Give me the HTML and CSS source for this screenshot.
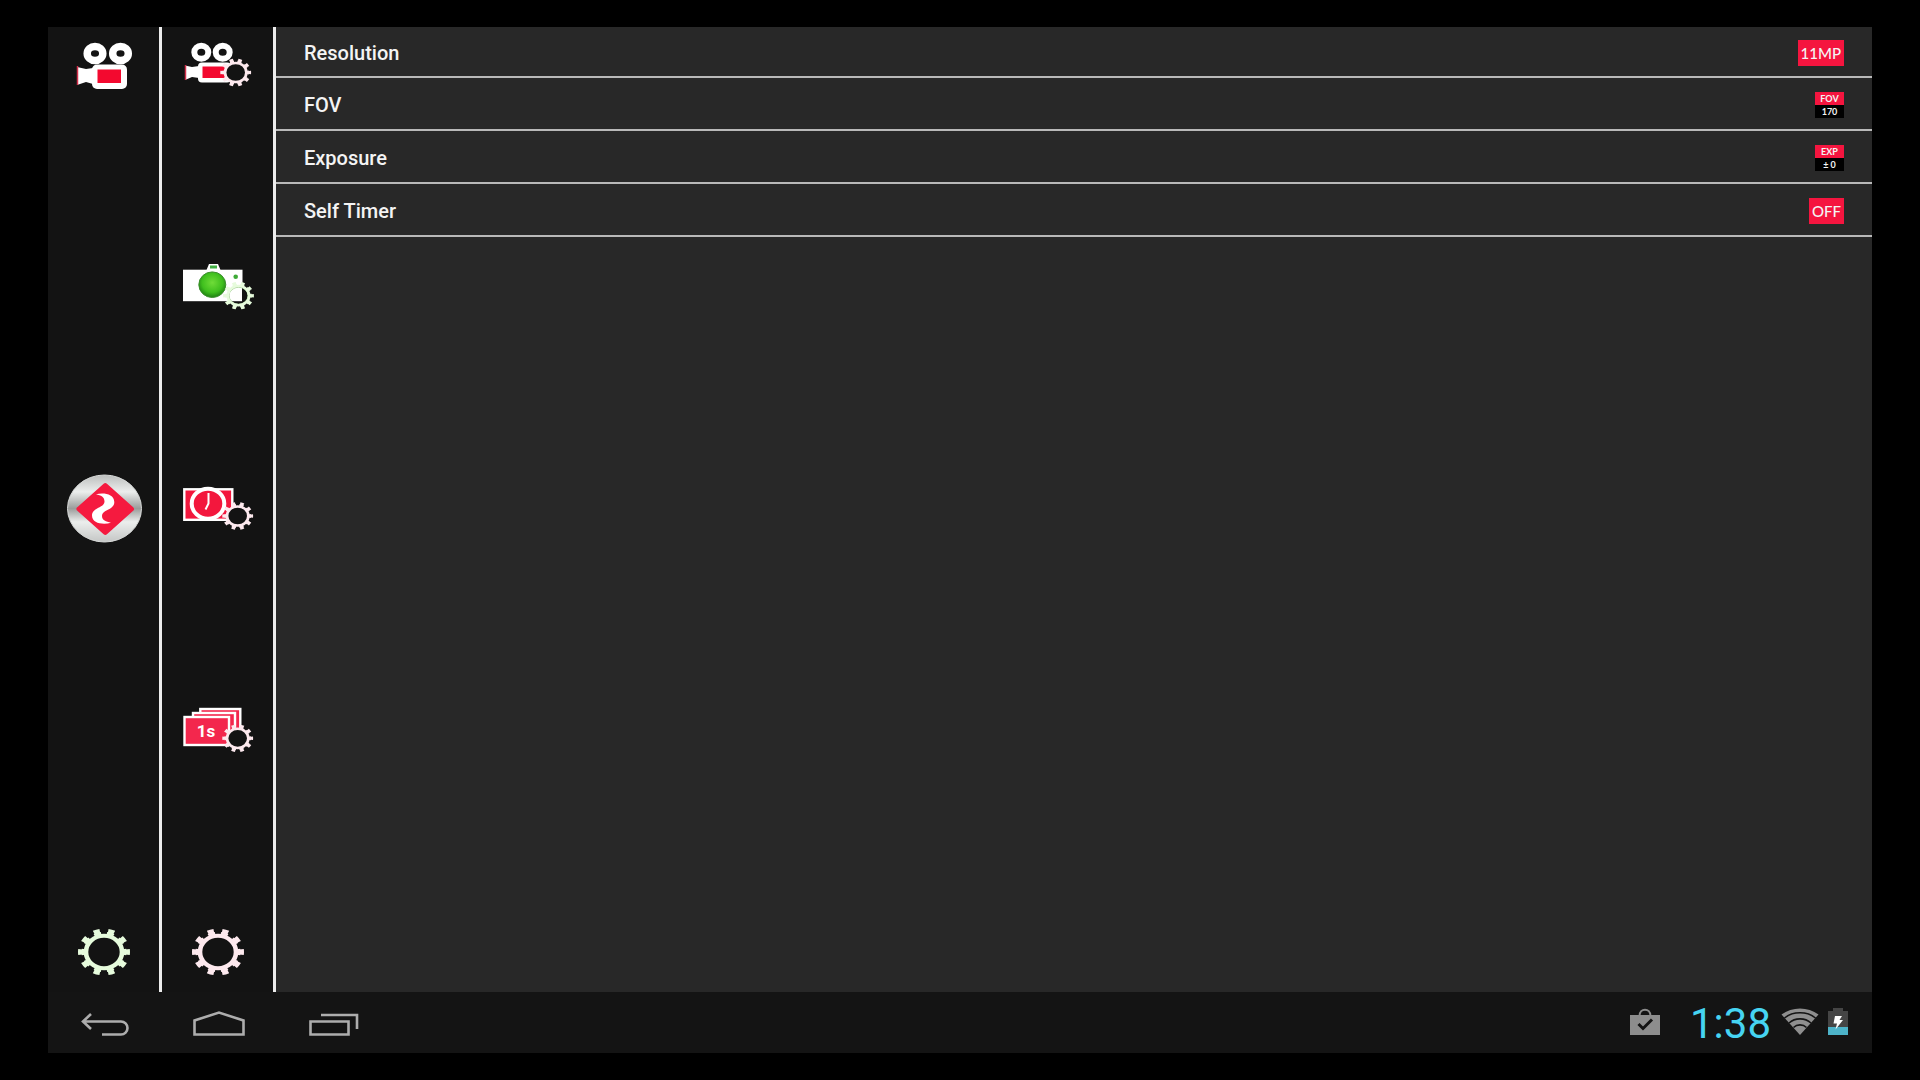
FILE: index.html
```html
<!DOCTYPE html>
<html lang="en">
<head>
    <meta charset="UTF-8">
    <meta name="viewport" content="width=device-width, initial-scale=1.0">
    <title>Photo Settings</title>
    <link rel="stylesheet" href="styles.css">
</head>
<body>

    <!-- Shared gear shape -->
    <svg class="defs" width="0" height="0" aria-hidden="true">
        <defs>
            <symbol id="gear" viewBox="-27 -27 54 54" overflow="visible">
                <g transform="scale(1 0.9)" fill="none" stroke="currentColor">
                    <circle r="18" stroke-width="4.6"/>
                    <circle r="20.5" stroke-width="4" pathLength="10" stroke-dasharray="0.54 0.46" stroke-dashoffset="0.27"/>
                    <circle r="22.5" stroke-width="7" pathLength="10" stroke-dasharray="0.42 0.58" stroke-dashoffset="0.21"/>
                </g>
            </symbol>
            <radialGradient id="lens" cx="0.5" cy="0.42" r="0.58">
                <stop offset="0" stop-color="#6fdc38"/>
                <stop offset="0.65" stop-color="#3fbf1e"/>
                <stop offset="1" stop-color="#1f8012"/>
            </radialGradient>
            <linearGradient id="metal" x1="0" y1="0" x2="0" y2="1">
                <stop offset="0" stop-color="#bcbebd"/>
                <stop offset="0.25" stop-color="#eceeed"/>
                <stop offset="0.5" stop-color="#9a9c9b"/>
                <stop offset="0.7" stop-color="#eceeed"/>
                <stop offset="1" stop-color="#c4c6c5"/>
            </linearGradient>
        </defs>
    </svg>

    <main class="app">
        <!-- Main mode bar -->
        <nav class="sidebar" aria-label="Mode">
            <button class="tool" type="button" aria-label="Video">
                <svg width="81" height="74" viewBox="0 0 81 74">
                    <path d="M14 40 L23 42 L30 41 V57 L23 55 L14 58 Z" fill="#fff"/>
                    <path d="M14.5 39 V58" stroke="#d2304c" stroke-width="1.5"/>
                    <rect x="29" y="37.5" width="35" height="24.5" rx="5" fill="#fff"/>
                    <rect x="34.5" y="42.5" width="23.5" height="13.5" fill="#f3092f"/>
                    <ellipse cx="32" cy="26.5" rx="7.8" ry="7" fill="#131313" stroke="#fff" stroke-width="7.5"/>
                    <ellipse cx="57.5" cy="26.5" rx="7.8" ry="7" fill="#131313" stroke="#fff" stroke-width="7.5"/>
                </svg>
            </button>
            <button class="tool" type="button" aria-label="Shutter">
                <svg width="81" height="74" viewBox="0 0 81 74">
                    <ellipse cx="41.5" cy="37.5" rx="37" ry="33.5" fill="url(#metal)" stroke="#d8dad9" stroke-width="1"/>
                    <path d="M42.3 14.5 L68.5 38 L42.3 61.5 L16 38 Z" fill="#f51a3f" stroke="#f51a3f" stroke-width="5" stroke-linejoin="round"/>
                    <path d="M33 23.3 C41 21.5 51 23 51.3 31 C51.5 39 39 38.5 39 45 C39 49.5 43 50.5 48 51.8 C40 54 29 52.5 29 44.5 C29 36.5 41.5 37 41.5 30.5 C41.5 26 38 24.5 33 23.3 Z" fill="#fff"/>
                </svg>
            </button>
            <button class="tool green" type="button" aria-label="Settings">
                <svg width="81" height="74" viewBox="0 0 81 74">
                    <use href="#gear" x="14" y="11" width="54" height="54"/>
                </svg>
            </button>
        </nav>

        <!-- Settings categories -->
        <nav class="sidebar" aria-label="Settings category">
            <button class="tool pink" type="button" aria-label="Video settings">
                <svg width="81" height="74" viewBox="0 0 81 74">
                    <path d="M8 38.5 L15 40 L22 39 V51 L15 50 L8 53 Z" fill="#fff"/>
                    <path d="M8.5 38 V53" stroke="#d2304c" stroke-width="1.5"/>
                    <rect x="21" y="35.5" width="33" height="20" rx="4" fill="#fff"/>
                    <rect x="25.5" y="39.5" width="24" height="11.5" fill="#f3092f"/>
                    <ellipse cx="24.3" cy="25.3" rx="7" ry="6.5" fill="#131313" stroke="#fff" stroke-width="6"/>
                    <ellipse cx="45.7" cy="25.3" rx="7" ry="6.5" fill="#131313" stroke="#fff" stroke-width="6"/>
                    <ellipse cx="58.7" cy="45.5" rx="11" ry="10" fill="#131313"/>
                    <use href="#gear" x="42.7" y="29.5" width="32" height="32"/>
                </svg>
            </button>
            <button class="tool green" type="button" aria-label="Photo settings">
                <svg width="81" height="74" viewBox="0 0 81 74">
                    <path d="M29.5 21 L32 15 H41 L43.5 21 Z" fill="#fff"/>
                    <rect x="33" y="16.5" width="7" height="3" fill="#42b044"/>
                    <rect x="6" y="20.7" width="59.5" height="31.5" fill="#fff"/>
                    <ellipse cx="35.3" cy="35.7" rx="13.5" ry="12.8" fill="url(#lens)" stroke="#3b8f2c" stroke-width="1"/>
                    <circle cx="58.7" cy="27.7" r="2.3" fill="#3eaa37"/>
                    <path d="M65 37.5 a11 10 0 0 1 0 18 Z" fill="#131313"/>
                    <ellipse cx="61.5" cy="46.7" rx="9.5" ry="8.5" fill="none" stroke="#8fbf80" stroke-width="1"/>
                    <use href="#gear" x="45.5" y="30.7" width="32" height="32"/>
                </svg>
            </button>
            <button class="tool pink" type="button" aria-label="Time lapse settings">
                <svg width="81" height="74" viewBox="0 0 81 74">
                    <rect x="7.3" y="18.3" width="48" height="30.5" fill="#f3173d" stroke="#fff" stroke-width="2.4"/>
                    <ellipse cx="31" cy="32.7" rx="16.3" ry="15" fill="#f3173d" stroke="#fff" stroke-width="4"/>
                    <path d="M31.5 22 V32.5 L28.5 38.5" fill="none" stroke="#fff" stroke-width="2"/>
                    <ellipse cx="60.7" cy="45" rx="11" ry="10" fill="#131313"/>
                    <use href="#gear" x="44.7" y="29" width="32" height="32"/>
                </svg>
            </button>
            <button class="tool pink" type="button" aria-label="Burst settings">
                <svg width="81" height="74" viewBox="0 0 81 74">
                    <g fill="#f3274d" stroke="#fff" stroke-width="2.4">
                        <rect x="23.3" y="17" width="40" height="24"/>
                        <rect x="16" y="21" width="42" height="27"/>
                        <rect x="7.5" y="25" width="44.5" height="28"/>
                    </g>
                    <text class="burst" x="29" y="45" text-anchor="middle">1s</text>
                    <ellipse cx="60.7" cy="46.3" rx="11" ry="10" fill="#131313"/>
                    <use href="#gear" x="44.7" y="30.3" width="32" height="32"/>
                </svg>
            </button>
            <button class="tool pink" type="button" aria-label="General settings">
                <svg width="81" height="74" viewBox="0 0 81 74">
                    <use href="#gear" x="14" y="11" width="54" height="54"/>
                </svg>
            </button>
        </nav>

        <!-- Photo options -->
        <section class="options">
            <button class="option" type="button">
                <span>Resolution</span>
                <span class="badge">11MP</span>
            </button>
            <button class="option" type="button">
                <span>FOV</span>
                <span class="badge-split"><span class="top">FOV</span><span class="bottom">170</span></span>
            </button>
            <button class="option" type="button">
                <span>Exposure</span>
                <span class="badge-split"><span class="top">EXP</span><span class="bottom">± 0</span></span>
            </button>
            <button class="option" type="button">
                <span>Self Timer</span>
                <span class="badge">OFF</span>
            </button>
        </section>
    </main>

    <!-- System bar -->
    <footer class="system-bar">
        <button class="nav-button" type="button" aria-label="Back">
            <svg width="60" height="40" viewBox="0 0 60 40">
                <path d="M16 11 L8 18.5 L16 26 M8 18.5 H46 A6.5 6.5 0 0 1 46 31.5 H27"/>
            </svg>
        </button>
        <button class="nav-button" type="button" aria-label="Home">
            <svg width="60" height="40" viewBox="0 0 60 40">
                <path d="M5.5 31.5 V17.5 L30 9.5 L54.5 17.5 V31.5 Z"/>
            </svg>
        </button>
        <button class="nav-button" type="button" aria-label="Recent apps">
            <svg width="60" height="40" viewBox="0 0 60 40">
                <path d="M7.5 18.5 H45.5 V31.5 H7.5 Z M18 12 H54 V26"/>
            </svg>
        </button>

        <div class="status">
            <svg class="bag" width="30" height="28" viewBox="0 0 30 28">
                <path d="M9.5 8 C9.5 -0.5 20.5 -0.5 20.5 8" fill="none" stroke="#8d8d8d" stroke-width="2"/>
                <rect y="7" width="30" height="20" fill="#8d8d8d"/>
                <path d="M8.5 16 L13 20.5 L22 11.5" fill="none" stroke="#141414" stroke-width="3"/>
            </svg>
            <time class="clock">1:38</time>
            <svg class="wifi" width="38" height="28" viewBox="0 0 38 28">
                <path d="M19 27 L0.5 6.5 C11 -1.5 27 -1.5 37.5 6.5 Z" fill="#8f8f8f"/>
                <g fill="none" stroke="#141414" stroke-width="1.6">
                    <path d="M3.5 10 C12 3 26 3 34.5 10"/>
                    <path d="M8 15 C14 9.5 24 9.5 30 15"/>
                    <path d="M12.5 19.5 C16 16 22 16 25.5 19.5"/>
                </g>
            </svg>
            <svg class="battery" width="20" height="28" viewBox="0 0 20 28">
                <path d="M0 3 H5 V0 H15 V3 H20 V20 H0 Z" fill="#454545"/>
                <rect y="19" width="20" height="8" fill="#4db3c9"/>
                <path d="M7 8 H14 L11.5 12 H15 L7.5 21.5 L9 15.5 H5.5 Z" fill="#fff"/>
            </svg>
        </div>
    </footer>

</body>
</html>
```
FILE: styles.css
```css
* {
    box-sizing: border-box;
}
body {
    display: flex;
    flex-direction: column;
    height: 100vh;
    margin: 0;
    padding: 27px 48px;
    background-color: #000;
    color: #f4f4f4;
    font-family: Roboto, sans-serif;
}
button {
    margin: 0;
    padding: 0;
    border: 0;
    background: none;
    color: inherit;
    font-family: inherit;
    cursor: pointer;
}
svg {
    display: block;
}
.defs {
    position: absolute;
}
.app {
    display: flex;
    flex: 1;
    min-height: 0;
}

/* Sidebars */
.sidebar {
    display: flex;
    flex-direction: column;
    justify-content: space-between;
    align-items: center;
    width: 114px;
    padding-bottom: 4px;
    border-right: 3px solid #ececec;
    background-color: #131313;
}
.green {
    color: #e6fbdc;
}
.pink {
    color: #fde9ee;
}
.burst {
    fill: #fff;
    font-size: 17px;
    font-weight: 700;
}

/* Option list */
.options {
    flex: 1;
    background-color: #282828;
}
.option {
    display: flex;
    justify-content: space-between;
    align-items: center;
    width: 100%;
    height: 53px;
    padding: 2px 28px 0;
    border-bottom: 2px solid #b9b9b9;
    font-size: 20px;
    font-weight: 500;
}
.option:first-child {
    height: 51px;
}
.badge {
    padding: 0 3px;
    background-color: #f5153f;
    font-family: Lato, sans-serif;
    font-size: 15px;
    font-weight: 500;
    line-height: 26px;
}
.badge-split {
    width: 29px;
    font-family: Lato, sans-serif;
    font-size: 9px;
    font-weight: 700;
    line-height: 13px;
    text-align: center;
}
.top, .bottom {
    display: block;
}
.top {
    background-color: #f5153f;
}
.bottom {
    background-color: #000;
}

/* System bar */
.system-bar {
    display: flex;
    align-items: center;
    height: 61px;
    background-color: #141414;
}
.nav-button {
    display: flex;
    justify-content: center;
    width: 114px;
}
.nav-button path {
    fill: none;
    stroke: #adadad;
    stroke-width: 2.6;
}
.status {
    display: flex;
    align-items: center;
    margin-left: auto;
    padding-right: 24px;
}
.status svg {
    margin-bottom: 2px;
}
.clock {
    margin: 0 10px 0 30px;
    padding-top: 2px;
    color: #46d4f2;
    font-size: 42px;
    line-height: 59px;
}
.status .battery {
    margin-left: 9px;
}
```
